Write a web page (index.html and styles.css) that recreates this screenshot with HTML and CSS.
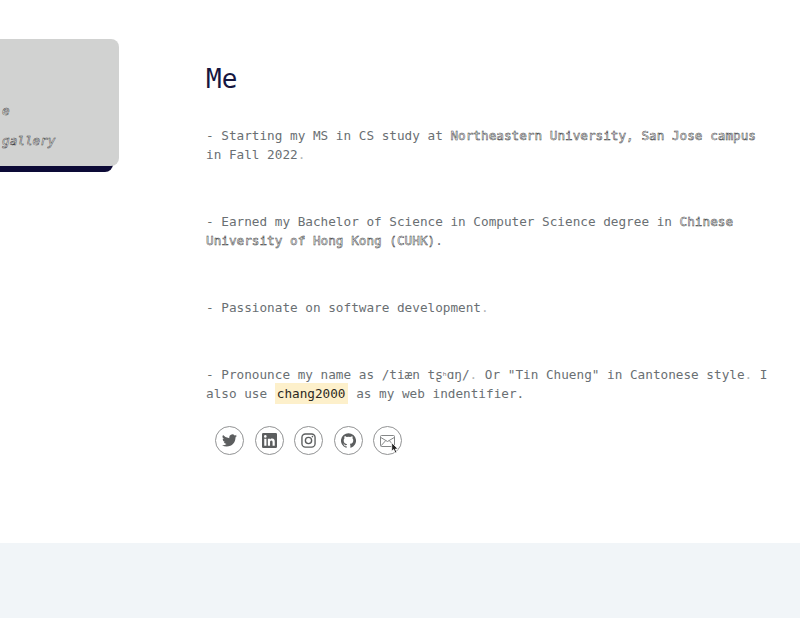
FILE: index.html
```html
<!DOCTYPE html>
<html lang="en">
<head>
<meta charset="utf-8">
<title>Me</title>
<link rel="stylesheet" href="styles.css">
</head>
<body>
<div class="page">
  <aside class="side">
    <nav class="menu">
      <a class="outlined">e</a>
      <a class="outlined">gallery</a>
    </nav>
  </aside>
  <main class="about">
    <h1>Me</h1>
    <p>- Starting my MS in CS study at <b class="outlined">Northeastern University, San Jose campus</b><br>in Fall 2022<span class="faint">.</span></p>
    <p>- Earned my Bachelor of Science in Computer Science degree in <b class="outlined">Chinese<br>University of Hong Kong (CUHK)</b>.</p>
    <p>- Passionate on software development<span class="faint">.</span></p>
    <p>- Pronounce my name as /tiæn tʂ<span class="aspirate">ʰ</span>ɑŋ/<span class="faint">.</span> Or "Tin Chueng" in Cantonese style<span class="faint">.</span> I<br>also use <mark>chang2000</mark> as my web indentifier.</p>
    <div class="social">
      <a><svg width="15" height="15" viewBox="0 0 24 24"><path fill="currentColor" d="M23.95 4.57a10 10 0 0 1-2.82.78 4.96 4.96 0 0 0 2.16-2.73 9.9 9.9 0 0 1-3.12 1.2 4.92 4.92 0 0 0-8.39 4.48A14 14 0 0 1 1.64 3.16a4.92 4.92 0 0 0 1.52 6.57 4.9 4.9 0 0 1-2.23-.61v.06a4.92 4.92 0 0 0 3.95 4.83 5 5 0 0 1-2.21.08 4.94 4.94 0 0 0 4.6 3.42A9.87 9.87 0 0 1 0 19.54a14 14 0 0 0 7.55 2.21c9.14 0 14.31-7.72 14.01-14.64a10 10 0 0 0 2.39-2.54z"/></svg></a>
      <a><svg width="15" height="15" viewBox="0 0 24 24"><path fill="currentColor" fill-rule="evenodd" d="M2 0h20a2 2 0 0 1 2 2v20a2 2 0 0 1-2 2H2a2 2 0 0 1-2-2V2a2 2 0 0 1 2-2zm1.6 9v11.4h3.5V9zM5.3 3.3a2.1 2.1 0 1 0 0 4.2 2.1 2.1 0 0 0 0-4.2zM9.4 9v11.4h3.5v-5.6c0-1.5.3-3 2.1-3s1.9 1.7 1.9 3.1v5.5h3.5v-6.2c0-3.1-.7-5.5-4.3-5.5-1.7 0-2.8.9-3.3 1.8V9z"/></svg></a>
      <a><svg width="15" height="15" viewBox="0 0 24 24" fill="none" stroke="currentColor" stroke-width="2.2"><rect x="1.5" y="1.5" width="21" height="21" rx="5.5"/><circle cx="12" cy="12" r="5"/><circle cx="18.3" cy="5.7" r="1.3" fill="currentColor" stroke="none"/></svg></a>
      <a><svg width="15" height="15" viewBox="0 0 24 24"><path fill="currentColor" d="M12 .3a12 12 0 0 0-3.8 23.4c.6.1.8-.3.8-.6v-2c-3.3.7-4-1.6-4-1.6-.6-1.4-1.4-1.8-1.4-1.8-1-.7.1-.7.1-.7 1.2 0 1.900 1.200 1.900 1.200 1 1.800 2.800 1.300 3.500 1 0-.8.4-1.300.7-1.600-2.700-.3-5.500-1.300-5.500-6 0-1.200.5-2.300 1.300-3.100-.2-.4-.6-1.600 0-3.200 0 0 1-.3 3.400 1.200a11.500 11.500 0 0 1 6 0c2.300-1.500 3.300-1.200 3.300-1.200.6 1.600.2 2.800 0 3.200.9.800 1.300 1.900 1.300 3.200 0 4.600-2.800 5.600-5.500 5.900.5.400.9 1 .9 2.200v3.300c0 .3.1.7.8.6A12 12 0 0 0 12 .3"/></svg></a>
      <a class="mail"><svg width="15" height="12" viewBox="0 0 15 12" fill="none" stroke="currentColor"><rect x=".5" y=".5" width="14" height="11" rx="1"/><path d="M.8 2.5l6.700 4 6.700-4M1 10.800l4.700-5.200M14 10.800L9.300 5.600"/></svg>
        <svg class="cursor" width="8" height="12" viewBox="0 0 8 12"><path fill="#222" stroke="#fff" stroke-width=".8" d="M.7.7v8.600l2-1.800 1.400 3.500 1.700-.7-1.400-3.300h2.700z"/></svg></a>
    </div>
  </main>
</div>
<footer class="footer"></footer>
</body>
</html>
```
FILE: styles.css
```css
* { box-sizing: border-box; }

body {
  margin: 0;
  height: 618px;
  overflow: hidden;
  background: #fff;
  color: #6a6f73;
  font: 12.69px/19px "DejaVu Sans Mono", "Liberation Mono", monospace;
}

.page {
  display: flex;
  align-items: flex-start;
  height: 543px;
}

.side {
  flex: none;
  width: 119px;
  height: 127px;
  margin-top: 39px;
  padding-top: 62px;
  border-radius: 0 8px 8px 0;
  background: #d1d2d1;
  box-shadow: -6px 6px 0 #0c0a36;
}

.menu {
  display: flex;
  flex-direction: column;
  align-items: flex-start;
  gap: 11px;
  padding-left: 2px;
  font-style: italic;
  white-space: nowrap;
}

.outlined {
  font-weight: 400;
  color: #fff;
  -webkit-text-stroke: 0.5px #3c4042;
}

.about {
  flex: none;
  margin-left: 87px;
  padding-top: 62px;
  white-space: nowrap;
}

h1 {
  margin: 0 0 30px;
  color: #16163f;
  font-size: 26px;
  font-weight: 400;
  line-height: 34px;
}

p { margin: 0 0 48px; }

.faint { opacity: .5; }

.aspirate {
  font-family: "DejaVu Sans", sans-serif;
  font-size: 9.5px;
  line-height: 1;
}

mark {
  margin: 0 1px 0 0;
  padding: 3px 2px 3px;
  background: #fdf0cb;
  color: #2b2822;
}

.social {
  display: flex;
  gap: 10.5px;
  margin: -25px 0 0 9px;
  color: #5c5e5f;
}

.social a {
  display: grid;
  place-items: center;
  position: relative;
  width: 29px;
  height: 29px;
  border: 1px solid #929394;
  border-radius: 50%;
}

.social .mail { color: #858788; }

.cursor {
  position: absolute;
  left: 17px;
  top: 15px;
}

.footer {
  height: 75px;
  background: #f1f5f8;
}
```
